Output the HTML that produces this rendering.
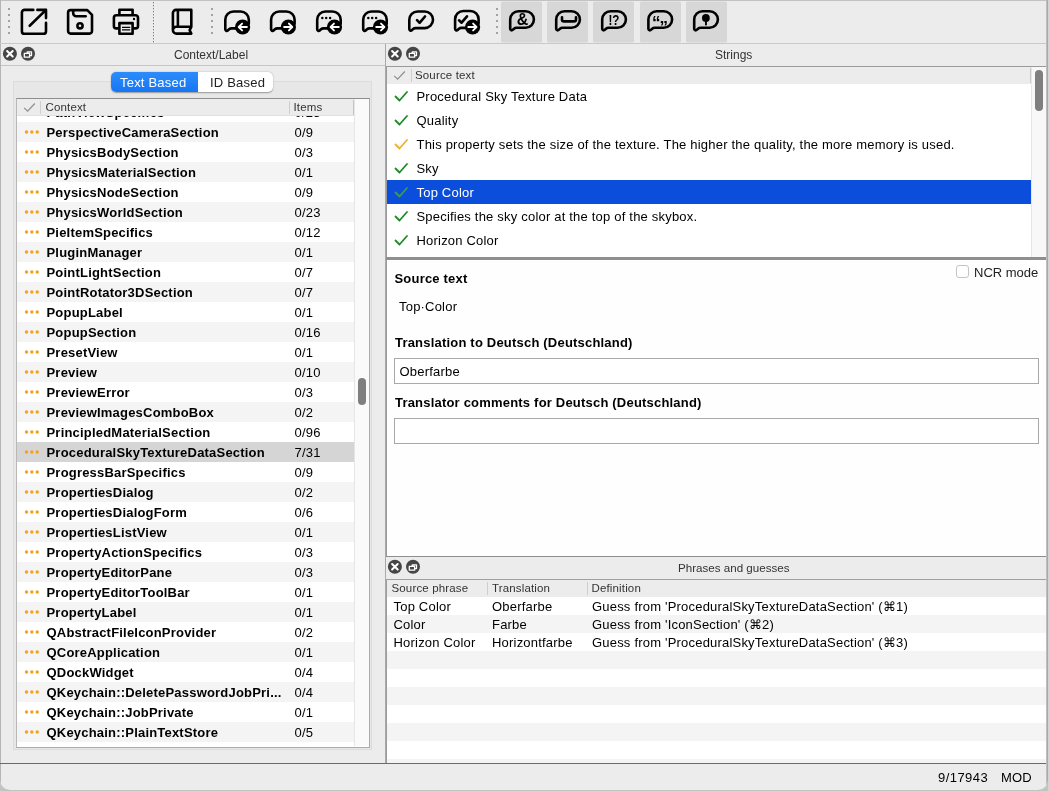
<!DOCTYPE html>
<html><head><meta charset="utf-8"><style>
html,body{margin:0;padding:0;}
body{width:1049px;height:791px;overflow:hidden;background:#c3c3c3;position:relative;font-family:"Liberation Sans", sans-serif;color:#000;-webkit-font-smoothing:antialiased;}
#win{will-change:transform;}
.ab{position:absolute;}
.t{position:absolute;white-space:nowrap;line-height:1;letter-spacing:0.2px;}
.h{letter-spacing:0;}
</style></head><body>
<div class="ab" id="win" style="left:0;top:0;width:1048px;height:790px;background:#ececec;border-radius:0 0 10px 10px;overflow:hidden;">

<div class="ab" style="left:0;top:0;width:1047px;height:1px;background:#c2c2c2"></div>
<div class="ab" style="left:0;top:0;width:1px;height:790px;background:#b5b5b5"></div>
<div class="ab" style="left:0;top:43px;width:1047px;height:1px;background:#c9c9c9"></div>
<svg class="ab" style="left:0;top:0" width="760" height="44" viewBox="0 0 760 44"><rect x="8" y="8" width="2" height="2" fill="#a2a2a2"/><rect x="8" y="14" width="2" height="2" fill="#a2a2a2"/><rect x="8" y="20" width="2" height="2" fill="#a2a2a2"/><rect x="8" y="26" width="2" height="2" fill="#a2a2a2"/><rect x="8" y="32" width="2" height="2" fill="#a2a2a2"/><rect x="211" y="8" width="2" height="2" fill="#a2a2a2"/><rect x="211" y="14" width="2" height="2" fill="#a2a2a2"/><rect x="211" y="20" width="2" height="2" fill="#a2a2a2"/><rect x="211" y="26" width="2" height="2" fill="#a2a2a2"/><rect x="211" y="32" width="2" height="2" fill="#a2a2a2"/><rect x="496" y="8" width="2" height="2" fill="#a2a2a2"/><rect x="496" y="14" width="2" height="2" fill="#a2a2a2"/><rect x="496" y="20" width="2" height="2" fill="#a2a2a2"/><rect x="496" y="26" width="2" height="2" fill="#a2a2a2"/><rect x="496" y="32" width="2" height="2" fill="#a2a2a2"/><rect x="153" y="2" width="1.1" height="1.3" fill="#767676"/><rect x="154.1" y="2" width="1" height="1.3" fill="#f8f8f8"/><rect x="153" y="5" width="1.1" height="1.3" fill="#767676"/><rect x="154.1" y="5" width="1" height="1.3" fill="#f8f8f8"/><rect x="153" y="8" width="1.1" height="1.3" fill="#767676"/><rect x="154.1" y="8" width="1" height="1.3" fill="#f8f8f8"/><rect x="153" y="11" width="1.1" height="1.3" fill="#767676"/><rect x="154.1" y="11" width="1" height="1.3" fill="#f8f8f8"/><rect x="153" y="14" width="1.1" height="1.3" fill="#767676"/><rect x="154.1" y="14" width="1" height="1.3" fill="#f8f8f8"/><rect x="153" y="17" width="1.1" height="1.3" fill="#767676"/><rect x="154.1" y="17" width="1" height="1.3" fill="#f8f8f8"/><rect x="153" y="20" width="1.1" height="1.3" fill="#767676"/><rect x="154.1" y="20" width="1" height="1.3" fill="#f8f8f8"/><rect x="153" y="23" width="1.1" height="1.3" fill="#767676"/><rect x="154.1" y="23" width="1" height="1.3" fill="#f8f8f8"/><rect x="153" y="26" width="1.1" height="1.3" fill="#767676"/><rect x="154.1" y="26" width="1" height="1.3" fill="#f8f8f8"/><rect x="153" y="29" width="1.1" height="1.3" fill="#767676"/><rect x="154.1" y="29" width="1" height="1.3" fill="#f8f8f8"/><rect x="153" y="32" width="1.1" height="1.3" fill="#767676"/><rect x="154.1" y="32" width="1" height="1.3" fill="#f8f8f8"/><rect x="153" y="35" width="1.1" height="1.3" fill="#767676"/><rect x="154.1" y="35" width="1" height="1.3" fill="#f8f8f8"/><rect x="153" y="38" width="1.1" height="1.3" fill="#767676"/><rect x="154.1" y="38" width="1" height="1.3" fill="#f8f8f8"/><rect x="153" y="41" width="1.1" height="1.3" fill="#767676"/><rect x="154.1" y="41" width="1" height="1.3" fill="#f8f8f8"/><rect x="501" y="1.5" width="41" height="41" rx="1.5" fill="#d7d7d7"/><rect x="547" y="1.5" width="41" height="41" rx="1.5" fill="#d7d7d7"/><rect x="593" y="1.5" width="41" height="41" rx="1.5" fill="#d7d7d7"/><rect x="640" y="1.5" width="41" height="41" rx="1.5" fill="#d7d7d7"/><rect x="686" y="1.5" width="41" height="41" rx="1.5" fill="#d7d7d7"/><path fill="none" stroke="#000" stroke-width="2.6" stroke-linecap="round" stroke-linejoin="round" d="M33.3,9.9 H24.5 A2.6,2.6 0 0 0 21.9,12.5 V31.2 A2.6,2.6 0 0 0 24.5,33.8 H43.4 A2.6,2.6 0 0 0 46,31.2 V22.7 M37.4,9.9 H46 V18.1 M29.7,25.8 L46,9.9"/><path fill="none" stroke="#000" stroke-width="2.6" stroke-linecap="round" stroke-linejoin="round" d="M68.1,12.6 A2.5,2.5 0 0 1 70.6,10.1 H87.3 L92,14.8 V31.1 A2.5,2.5 0 0 1 89.5,33.6 H70.6 A2.5,2.5 0 0 1 68.1,31.1 Z M73.2,10.1 V13.3 A3,3 0 0 0 76.2,16.3 H85.7"/><circle cx="80" cy="25.8" r="2.6" fill="none" stroke="#000" stroke-width="2.6" stroke-linecap="round" stroke-linejoin="round"/><path fill="none" stroke="#000" stroke-width="2.6" stroke-linecap="round" stroke-linejoin="round" d="M119.4,15.2 V9.7 H132.6 V15.2 M119.4,28.4 H116.4 A2.5,2.5 0 0 1 113.9,25.9 V17.7 A2.5,2.5 0 0 1 116.4,15.2 H135.5 A2.5,2.5 0 0 1 138,17.7 V25.9 A2.5,2.5 0 0 1 135.5,28.4 H132.6 M119.4,23.1 H132.6 V33.8 H119.4 Z"/><path d="M122,27.4 H130.2 M122,29.9 H130.2" stroke="#000" stroke-width="1.3"/><circle cx="134" cy="19" r="1.2" fill="#000"/><path fill="none" stroke="#000" stroke-width="2.6" stroke-linecap="round" stroke-linejoin="round" d="M176,9.9 H191.3 V26.8 L189.6,30.2 L191.3,33.6 H176.5 A3.6,3.6 0 0 1 172.9,30 V13 A3.1,3.1 0 0 1 176,9.9 Z M177.9,10.5 V26.8 M172.9,30.2 A3.4,3.4 0 0 1 176.3,26.8 H191.3"/><path fill="none" stroke="#000" stroke-width="2.6" stroke-linecap="round" stroke-linejoin="round" d="M225.3,29.299999999999997 V19.7 C225.3,15.19 228.99,11.5 233.5,11.5 H240.60000000000002 C245.11,11.5 248.8,15.19 248.8,19.7 V23.7 M225.3,29.299999999999997 C225.3,30.7 226.8,31.4 227.8,30.5 L229.10000000000002,29.299999999999997 C229.8,28.7 230.70000000000002,28.4 231.60000000000002,28.4 H236.3"/><circle cx="242.60000000000002" cy="27.0" r="7.6" fill="#000"/><path d="M246.90000000000003,27.0 H239.20000000000002 M242.10000000000002,23.6 L238.70000000000002,27.0 L242.10000000000002,30.4" fill="none" stroke="#fff" stroke-width="1.85" stroke-linecap="round" stroke-linejoin="round"/><path fill="none" stroke="#000" stroke-width="2.6" stroke-linecap="round" stroke-linejoin="round" d="M271.1,29.299999999999997 V19.7 C271.1,15.19 274.79,11.5 279.3,11.5 H286.40000000000003 C290.91,11.5 294.6,15.19 294.6,19.7 V23.7 M271.1,29.299999999999997 C271.1,30.7 272.6,31.4 273.6,30.5 L274.90000000000003,29.299999999999997 C275.6,28.7 276.5,28.4 277.40000000000003,28.4 H282.1"/><circle cx="288.40000000000003" cy="27.0" r="7.6" fill="#000"/><path d="M284.1,27.0 H291.8 M288.90000000000003,23.6 L292.3,27.0 L288.90000000000003,30.4" fill="none" stroke="#fff" stroke-width="1.85" stroke-linecap="round" stroke-linejoin="round"/><path fill="none" stroke="#000" stroke-width="2.6" stroke-linecap="round" stroke-linejoin="round" d="M317.2,29.299999999999997 V19.7 C317.2,15.19 320.89,11.5 325.4,11.5 H332.5 C337.01,11.5 340.7,15.19 340.7,19.7 V23.7 M317.2,29.299999999999997 C317.2,30.7 318.7,31.4 319.7,30.5 L321.0,29.299999999999997 C321.7,28.7 322.59999999999997,28.4 323.5,28.4 H328.2"/><circle cx="322.3" cy="17.9" r="1.25" fill="#000"/><circle cx="326.2" cy="17.9" r="1.25" fill="#000"/><circle cx="330.1" cy="17.9" r="1.25" fill="#000"/><circle cx="334.5" cy="27.0" r="7.6" fill="#000"/><path d="M338.8,27.0 H331.1 M334.0,23.6 L330.6,27.0 L334.0,30.4" fill="none" stroke="#fff" stroke-width="1.85" stroke-linecap="round" stroke-linejoin="round"/><path fill="none" stroke="#000" stroke-width="2.6" stroke-linecap="round" stroke-linejoin="round" d="M363.2,29.299999999999997 V19.7 C363.2,15.19 366.89,11.5 371.4,11.5 H378.5 C383.01,11.5 386.7,15.19 386.7,19.7 V23.7 M363.2,29.299999999999997 C363.2,30.7 364.7,31.4 365.7,30.5 L367.0,29.299999999999997 C367.7,28.7 368.59999999999997,28.4 369.5,28.4 H374.2"/><circle cx="368.3" cy="17.9" r="1.25" fill="#000"/><circle cx="372.2" cy="17.9" r="1.25" fill="#000"/><circle cx="376.1" cy="17.9" r="1.25" fill="#000"/><circle cx="380.5" cy="27.0" r="7.6" fill="#000"/><path d="M376.2,27.0 H383.9 M381.0,23.6 L384.4,27.0 L381.0,30.4" fill="none" stroke="#fff" stroke-width="1.85" stroke-linecap="round" stroke-linejoin="round"/><path fill="none" stroke="#000" stroke-width="2.6" stroke-linecap="round" stroke-linejoin="round" d="M409.3,19.8 C409.3,15.235 413.035,11.5 417.6,11.5 H424.7 C429.265,11.5 433.0,15.235 433.0,19.8 C433.0,24.365000000000002 429.265,28.1 424.7,28.1 H415.6 C414.7,28.1 413.8,28.400000000000002 413.1,29.0 L411.8,30.200000000000003 C410.8,31.1 409.3,30.400000000000002 409.3,29.0 Z"/><path fill="none" stroke="#000" stroke-width="2.6" stroke-linecap="round" stroke-linejoin="round" d="M417,20.2 L419.6,22.8 L425,16.5"/><path fill="none" stroke="#000" stroke-width="2.6" stroke-linecap="round" stroke-linejoin="round" d="M455.1,28.799999999999997 V19.2 C455.1,14.69 458.79,11 463.3,11 H470.40000000000003 C474.91,11 478.6,14.69 478.6,19.2 V23.2 M455.1,28.799999999999997 C455.1,30.2 456.6,30.9 457.6,30.0 L458.90000000000003,28.799999999999997 C459.6,28.2 460.5,27.9 461.40000000000003,27.9 H466.1"/><path fill="none" stroke="#000" stroke-width="2.6" stroke-linecap="round" stroke-linejoin="round" d="M459,20.3 L461.6,22.7 L467,16.3"/><circle cx="472.6" cy="27.0" r="7.6" fill="#000"/><path d="M468.3,27.0 H476.0 M473.1,23.6 L476.5,27.0 L473.1,30.4" fill="none" stroke="#fff" stroke-width="1.85" stroke-linecap="round" stroke-linejoin="round"/><path fill="none" stroke="#000" stroke-width="2.6" stroke-linecap="round" stroke-linejoin="round" d="M510.2,19.5 C510.2,14.934999999999999 513.935,11.2 518.5,11.2 H525.6 C530.165,11.2 533.9,14.934999999999999 533.9,19.5 C533.9,24.065 530.165,27.8 525.6,27.8 H516.5 C515.6,27.8 514.7,28.1 514.0,28.7 L512.7,29.900000000000002 C511.7,30.8 510.2,30.1 510.2,28.7 Z"/><path fill="none" stroke="#000" stroke-width="2.6" stroke-linecap="round" stroke-linejoin="round" d="M556.2,19.5 C556.2,14.934999999999999 559.9350000000001,11.2 564.5,11.2 H571.6000000000001 C576.1650000000001,11.2 579.9000000000001,14.934999999999999 579.9000000000001,19.5 C579.9000000000001,24.065 576.1650000000001,27.8 571.6000000000001,27.8 H562.5 C561.6,27.8 560.7,28.1 560.0,28.7 L558.7,29.900000000000002 C557.7,30.8 556.2,30.1 556.2,28.7 Z"/><path fill="none" stroke="#000" stroke-width="2.6" stroke-linecap="round" stroke-linejoin="round" d="M602.2,19.5 C602.2,14.934999999999999 605.9350000000001,11.2 610.5,11.2 H617.6000000000001 C622.1650000000001,11.2 625.9000000000001,14.934999999999999 625.9000000000001,19.5 C625.9000000000001,24.065 622.1650000000001,27.8 617.6000000000001,27.8 H608.5 C607.6,27.8 606.7,28.1 606.0,28.7 L604.7,29.900000000000002 C603.7,30.8 602.2,30.1 602.2,28.7 Z"/><path fill="none" stroke="#000" stroke-width="2.6" stroke-linecap="round" stroke-linejoin="round" d="M648.4,19.5 C648.4,14.934999999999999 652.135,11.2 656.6999999999999,11.2 H663.8000000000001 C668.365,11.2 672.1,14.934999999999999 672.1,19.5 C672.1,24.065 668.365,27.8 663.8000000000001,27.8 H654.6999999999999 C653.8,27.8 652.9,28.1 652.1999999999999,28.7 L650.9,29.900000000000002 C649.9,30.8 648.4,30.1 648.4,28.7 Z"/><path fill="none" stroke="#000" stroke-width="2.6" stroke-linecap="round" stroke-linejoin="round" d="M694.2,19.5 C694.2,14.934999999999999 697.9350000000001,11.2 702.5,11.2 H709.6000000000001 C714.1650000000001,11.2 717.9000000000001,14.934999999999999 717.9000000000001,19.5 C717.9000000000001,24.065 714.1650000000001,27.8 709.6000000000001,27.8 H700.5 C699.6,27.8 698.7,28.1 698.0,28.7 L696.7,29.900000000000002 C695.7,30.8 694.2,30.1 694.2,28.7 Z"/><text x="522.5" y="25.4" text-anchor="middle" font-family="Liberation Sans" font-weight="bold" font-size="16">&amp;</text><path fill="none" stroke="#000" stroke-width="2.6" stroke-linecap="round" stroke-linejoin="round" d="M562,17.2 V19.4 A2,2 0 0 0 564,21.4 H574 A2,2 0 0 0 576,19.4 V17.2"/><g transform="translate(614,25.3) scale(0.78,1)"><text x="0" y="0" text-anchor="middle" font-family="Liberation Sans" font-weight="bold" font-size="15">!?</text></g><text x="656.2" y="27.6" text-anchor="middle" font-family="Liberation Sans" font-weight="bold" font-size="17">&#8220;</text><text x="663.8" y="22.6" text-anchor="middle" font-family="Liberation Sans" font-weight="bold" font-size="17">&#8222;</text><circle cx="705.9" cy="17.9" r="3.9" fill="#000"/><rect x="705" y="20" width="1.9" height="5.3" fill="#000"/></svg>
<div class="ab" style="left:385px;top:44px;width:1px;height:719px;background:#a9a9a9"></div>
<div class="ab" style="left:1px;top:65px;width:384px;height:1px;background:#c6c6c6"></div>
<svg class="ab" style="left:2px;top:46px" width="36" height="16" viewBox="0 0 36 16">
<circle cx="7.9" cy="7.75" r="7" fill="#454545"/>
<path d="M5.1,4.95 L10.7,10.55 M10.7,4.95 L5.1,10.55" stroke="#fff" stroke-width="2" stroke-linecap="round"/>
<circle cx="26" cy="7.75" r="7" fill="#454545"/>
<path d="M25.2,7.4 V5.9 H29.5 V9.6 H27.6 M22.3,7.4 H27.6 V11.2 H22.3 Z" stroke="#fff" stroke-width="1.3" fill="none" stroke-linejoin="round"/>
</svg>
<div class="t h" style="left:174px;top:48.8px;font-size:12px;color:#333">Context/Label</div>
<div class="ab" style="left:13px;top:81px;width:359px;height:669px;background:#e7e7e7;border:1px solid #dcdcdc;box-sizing:border-box"></div>
<div class="ab" style="left:111px;top:72px;width:162px;height:20px;background:#fff;border-radius:5px;box-shadow:0 0.5px 1.5px rgba(0,0,0,0.35)"></div>
<div class="ab" style="left:111px;top:72px;width:87px;height:20px;background:linear-gradient(#2d8cfb,#1676f3);border-radius:5px 0 0 5px"></div>
<div class="t" style="left:120px;top:75.5px;font-size:13px;color:#fff">Text Based</div>
<div class="t" style="left:210px;top:75.5px;font-size:13px;color:#222">ID Based</div>
<div class="ab" style="left:16px;top:98px;width:354px;height:650px;background:#fff;border:1px solid #ababab;border-top-color:#8e8e8e;border-left-color:#b8b8b8;box-sizing:border-box;overflow:hidden">
<div class="ab" style="left:0;top:3px;width:337px;height:20px;background:#ffffff"></div>
<svg class="ab" style="left:6px;top:9px" width="18" height="8" viewBox="0 0 18 8"><circle cx="3.5" cy="4" r="1.7" fill="#f4a21a"/><circle cx="8.8" cy="4" r="1.7" fill="#f4a21a"/><circle cx="14.200000000000003" cy="4" r="1.7" fill="#f4a21a"/></svg>
<div class="t" style="left:29.5px;top:7px;font-size:13px;font-weight:bold">PathViewSpecifics</div>
<div class="t" style="left:277.5px;top:7px;font-size:13px">0/23</div>
<div class="ab" style="left:0;top:23px;width:337px;height:20px;background:#f4f4f4"></div>
<svg class="ab" style="left:6px;top:29px" width="18" height="8" viewBox="0 0 18 8"><circle cx="3.5" cy="4" r="1.7" fill="#f4a21a"/><circle cx="8.8" cy="4" r="1.7" fill="#f4a21a"/><circle cx="14.200000000000003" cy="4" r="1.7" fill="#f4a21a"/></svg>
<div class="t" style="left:29.5px;top:27px;font-size:13px;font-weight:bold">PerspectiveCameraSection</div>
<div class="t" style="left:277.5px;top:27px;font-size:13px">0/9</div>
<div class="ab" style="left:0;top:43px;width:337px;height:20px;background:#ffffff"></div>
<svg class="ab" style="left:6px;top:49px" width="18" height="8" viewBox="0 0 18 8"><circle cx="3.5" cy="4" r="1.7" fill="#f4a21a"/><circle cx="8.8" cy="4" r="1.7" fill="#f4a21a"/><circle cx="14.200000000000003" cy="4" r="1.7" fill="#f4a21a"/></svg>
<div class="t" style="left:29.5px;top:47px;font-size:13px;font-weight:bold">PhysicsBodySection</div>
<div class="t" style="left:277.5px;top:47px;font-size:13px">0/3</div>
<div class="ab" style="left:0;top:63px;width:337px;height:20px;background:#f4f4f4"></div>
<svg class="ab" style="left:6px;top:69px" width="18" height="8" viewBox="0 0 18 8"><circle cx="3.5" cy="4" r="1.7" fill="#f4a21a"/><circle cx="8.8" cy="4" r="1.7" fill="#f4a21a"/><circle cx="14.200000000000003" cy="4" r="1.7" fill="#f4a21a"/></svg>
<div class="t" style="left:29.5px;top:67px;font-size:13px;font-weight:bold">PhysicsMaterialSection</div>
<div class="t" style="left:277.5px;top:67px;font-size:13px">0/1</div>
<div class="ab" style="left:0;top:83px;width:337px;height:20px;background:#ffffff"></div>
<svg class="ab" style="left:6px;top:89px" width="18" height="8" viewBox="0 0 18 8"><circle cx="3.5" cy="4" r="1.7" fill="#f4a21a"/><circle cx="8.8" cy="4" r="1.7" fill="#f4a21a"/><circle cx="14.200000000000003" cy="4" r="1.7" fill="#f4a21a"/></svg>
<div class="t" style="left:29.5px;top:87px;font-size:13px;font-weight:bold">PhysicsNodeSection</div>
<div class="t" style="left:277.5px;top:87px;font-size:13px">0/9</div>
<div class="ab" style="left:0;top:103px;width:337px;height:20px;background:#f4f4f4"></div>
<svg class="ab" style="left:6px;top:109px" width="18" height="8" viewBox="0 0 18 8"><circle cx="3.5" cy="4" r="1.7" fill="#f4a21a"/><circle cx="8.8" cy="4" r="1.7" fill="#f4a21a"/><circle cx="14.200000000000003" cy="4" r="1.7" fill="#f4a21a"/></svg>
<div class="t" style="left:29.5px;top:107px;font-size:13px;font-weight:bold">PhysicsWorldSection</div>
<div class="t" style="left:277.5px;top:107px;font-size:13px">0/23</div>
<div class="ab" style="left:0;top:123px;width:337px;height:20px;background:#ffffff"></div>
<svg class="ab" style="left:6px;top:129px" width="18" height="8" viewBox="0 0 18 8"><circle cx="3.5" cy="4" r="1.7" fill="#f4a21a"/><circle cx="8.8" cy="4" r="1.7" fill="#f4a21a"/><circle cx="14.200000000000003" cy="4" r="1.7" fill="#f4a21a"/></svg>
<div class="t" style="left:29.5px;top:127px;font-size:13px;font-weight:bold">PieItemSpecifics</div>
<div class="t" style="left:277.5px;top:127px;font-size:13px">0/12</div>
<div class="ab" style="left:0;top:143px;width:337px;height:20px;background:#f4f4f4"></div>
<svg class="ab" style="left:6px;top:149px" width="18" height="8" viewBox="0 0 18 8"><circle cx="3.5" cy="4" r="1.7" fill="#f4a21a"/><circle cx="8.8" cy="4" r="1.7" fill="#f4a21a"/><circle cx="14.200000000000003" cy="4" r="1.7" fill="#f4a21a"/></svg>
<div class="t" style="left:29.5px;top:147px;font-size:13px;font-weight:bold">PluginManager</div>
<div class="t" style="left:277.5px;top:147px;font-size:13px">0/1</div>
<div class="ab" style="left:0;top:163px;width:337px;height:20px;background:#ffffff"></div>
<svg class="ab" style="left:6px;top:169px" width="18" height="8" viewBox="0 0 18 8"><circle cx="3.5" cy="4" r="1.7" fill="#f4a21a"/><circle cx="8.8" cy="4" r="1.7" fill="#f4a21a"/><circle cx="14.200000000000003" cy="4" r="1.7" fill="#f4a21a"/></svg>
<div class="t" style="left:29.5px;top:167px;font-size:13px;font-weight:bold">PointLightSection</div>
<div class="t" style="left:277.5px;top:167px;font-size:13px">0/7</div>
<div class="ab" style="left:0;top:183px;width:337px;height:20px;background:#f4f4f4"></div>
<svg class="ab" style="left:6px;top:189px" width="18" height="8" viewBox="0 0 18 8"><circle cx="3.5" cy="4" r="1.7" fill="#f4a21a"/><circle cx="8.8" cy="4" r="1.7" fill="#f4a21a"/><circle cx="14.200000000000003" cy="4" r="1.7" fill="#f4a21a"/></svg>
<div class="t" style="left:29.5px;top:187px;font-size:13px;font-weight:bold">PointRotator3DSection</div>
<div class="t" style="left:277.5px;top:187px;font-size:13px">0/7</div>
<div class="ab" style="left:0;top:203px;width:337px;height:20px;background:#ffffff"></div>
<svg class="ab" style="left:6px;top:209px" width="18" height="8" viewBox="0 0 18 8"><circle cx="3.5" cy="4" r="1.7" fill="#f4a21a"/><circle cx="8.8" cy="4" r="1.7" fill="#f4a21a"/><circle cx="14.200000000000003" cy="4" r="1.7" fill="#f4a21a"/></svg>
<div class="t" style="left:29.5px;top:207px;font-size:13px;font-weight:bold">PopupLabel</div>
<div class="t" style="left:277.5px;top:207px;font-size:13px">0/1</div>
<div class="ab" style="left:0;top:223px;width:337px;height:20px;background:#f4f4f4"></div>
<svg class="ab" style="left:6px;top:229px" width="18" height="8" viewBox="0 0 18 8"><circle cx="3.5" cy="4" r="1.7" fill="#f4a21a"/><circle cx="8.8" cy="4" r="1.7" fill="#f4a21a"/><circle cx="14.200000000000003" cy="4" r="1.7" fill="#f4a21a"/></svg>
<div class="t" style="left:29.5px;top:227px;font-size:13px;font-weight:bold">PopupSection</div>
<div class="t" style="left:277.5px;top:227px;font-size:13px">0/16</div>
<div class="ab" style="left:0;top:243px;width:337px;height:20px;background:#ffffff"></div>
<svg class="ab" style="left:6px;top:249px" width="18" height="8" viewBox="0 0 18 8"><circle cx="3.5" cy="4" r="1.7" fill="#f4a21a"/><circle cx="8.8" cy="4" r="1.7" fill="#f4a21a"/><circle cx="14.200000000000003" cy="4" r="1.7" fill="#f4a21a"/></svg>
<div class="t" style="left:29.5px;top:247px;font-size:13px;font-weight:bold">PresetView</div>
<div class="t" style="left:277.5px;top:247px;font-size:13px">0/1</div>
<div class="ab" style="left:0;top:263px;width:337px;height:20px;background:#f4f4f4"></div>
<svg class="ab" style="left:6px;top:269px" width="18" height="8" viewBox="0 0 18 8"><circle cx="3.5" cy="4" r="1.7" fill="#f4a21a"/><circle cx="8.8" cy="4" r="1.7" fill="#f4a21a"/><circle cx="14.200000000000003" cy="4" r="1.7" fill="#f4a21a"/></svg>
<div class="t" style="left:29.5px;top:267px;font-size:13px;font-weight:bold">Preview</div>
<div class="t" style="left:277.5px;top:267px;font-size:13px">0/10</div>
<div class="ab" style="left:0;top:283px;width:337px;height:20px;background:#ffffff"></div>
<svg class="ab" style="left:6px;top:289px" width="18" height="8" viewBox="0 0 18 8"><circle cx="3.5" cy="4" r="1.7" fill="#f4a21a"/><circle cx="8.8" cy="4" r="1.7" fill="#f4a21a"/><circle cx="14.200000000000003" cy="4" r="1.7" fill="#f4a21a"/></svg>
<div class="t" style="left:29.5px;top:287px;font-size:13px;font-weight:bold">PreviewError</div>
<div class="t" style="left:277.5px;top:287px;font-size:13px">0/3</div>
<div class="ab" style="left:0;top:303px;width:337px;height:20px;background:#f4f4f4"></div>
<svg class="ab" style="left:6px;top:309px" width="18" height="8" viewBox="0 0 18 8"><circle cx="3.5" cy="4" r="1.7" fill="#f4a21a"/><circle cx="8.8" cy="4" r="1.7" fill="#f4a21a"/><circle cx="14.200000000000003" cy="4" r="1.7" fill="#f4a21a"/></svg>
<div class="t" style="left:29.5px;top:307px;font-size:13px;font-weight:bold">PreviewImagesComboBox</div>
<div class="t" style="left:277.5px;top:307px;font-size:13px">0/2</div>
<div class="ab" style="left:0;top:323px;width:337px;height:20px;background:#ffffff"></div>
<svg class="ab" style="left:6px;top:329px" width="18" height="8" viewBox="0 0 18 8"><circle cx="3.5" cy="4" r="1.7" fill="#f4a21a"/><circle cx="8.8" cy="4" r="1.7" fill="#f4a21a"/><circle cx="14.200000000000003" cy="4" r="1.7" fill="#f4a21a"/></svg>
<div class="t" style="left:29.5px;top:327px;font-size:13px;font-weight:bold">PrincipledMaterialSection</div>
<div class="t" style="left:277.5px;top:327px;font-size:13px">0/96</div>
<div class="ab" style="left:0;top:343px;width:337px;height:20px;background:#d5d5d5"></div>
<svg class="ab" style="left:6px;top:349px" width="18" height="8" viewBox="0 0 18 8"><circle cx="3.5" cy="4" r="1.7" fill="#f4a21a"/><circle cx="8.8" cy="4" r="1.7" fill="#f4a21a"/><circle cx="14.200000000000003" cy="4" r="1.7" fill="#f4a21a"/></svg>
<div class="t" style="left:29.5px;top:347px;font-size:13px;font-weight:bold">ProceduralSkyTextureDataSection</div>
<div class="t" style="left:277.5px;top:347px;font-size:13px">7/31</div>
<div class="ab" style="left:0;top:363px;width:337px;height:20px;background:#ffffff"></div>
<svg class="ab" style="left:6px;top:369px" width="18" height="8" viewBox="0 0 18 8"><circle cx="3.5" cy="4" r="1.7" fill="#f4a21a"/><circle cx="8.8" cy="4" r="1.7" fill="#f4a21a"/><circle cx="14.200000000000003" cy="4" r="1.7" fill="#f4a21a"/></svg>
<div class="t" style="left:29.5px;top:367px;font-size:13px;font-weight:bold">ProgressBarSpecifics</div>
<div class="t" style="left:277.5px;top:367px;font-size:13px">0/9</div>
<div class="ab" style="left:0;top:383px;width:337px;height:20px;background:#f4f4f4"></div>
<svg class="ab" style="left:6px;top:389px" width="18" height="8" viewBox="0 0 18 8"><circle cx="3.5" cy="4" r="1.7" fill="#f4a21a"/><circle cx="8.8" cy="4" r="1.7" fill="#f4a21a"/><circle cx="14.200000000000003" cy="4" r="1.7" fill="#f4a21a"/></svg>
<div class="t" style="left:29.5px;top:387px;font-size:13px;font-weight:bold">PropertiesDialog</div>
<div class="t" style="left:277.5px;top:387px;font-size:13px">0/2</div>
<div class="ab" style="left:0;top:403px;width:337px;height:20px;background:#ffffff"></div>
<svg class="ab" style="left:6px;top:409px" width="18" height="8" viewBox="0 0 18 8"><circle cx="3.5" cy="4" r="1.7" fill="#f4a21a"/><circle cx="8.8" cy="4" r="1.7" fill="#f4a21a"/><circle cx="14.200000000000003" cy="4" r="1.7" fill="#f4a21a"/></svg>
<div class="t" style="left:29.5px;top:407px;font-size:13px;font-weight:bold">PropertiesDialogForm</div>
<div class="t" style="left:277.5px;top:407px;font-size:13px">0/6</div>
<div class="ab" style="left:0;top:423px;width:337px;height:20px;background:#f4f4f4"></div>
<svg class="ab" style="left:6px;top:429px" width="18" height="8" viewBox="0 0 18 8"><circle cx="3.5" cy="4" r="1.7" fill="#f4a21a"/><circle cx="8.8" cy="4" r="1.7" fill="#f4a21a"/><circle cx="14.200000000000003" cy="4" r="1.7" fill="#f4a21a"/></svg>
<div class="t" style="left:29.5px;top:427px;font-size:13px;font-weight:bold">PropertiesListView</div>
<div class="t" style="left:277.5px;top:427px;font-size:13px">0/1</div>
<div class="ab" style="left:0;top:443px;width:337px;height:20px;background:#ffffff"></div>
<svg class="ab" style="left:6px;top:449px" width="18" height="8" viewBox="0 0 18 8"><circle cx="3.5" cy="4" r="1.7" fill="#f4a21a"/><circle cx="8.8" cy="4" r="1.7" fill="#f4a21a"/><circle cx="14.200000000000003" cy="4" r="1.7" fill="#f4a21a"/></svg>
<div class="t" style="left:29.5px;top:447px;font-size:13px;font-weight:bold">PropertyActionSpecifics</div>
<div class="t" style="left:277.5px;top:447px;font-size:13px">0/3</div>
<div class="ab" style="left:0;top:463px;width:337px;height:20px;background:#f4f4f4"></div>
<svg class="ab" style="left:6px;top:469px" width="18" height="8" viewBox="0 0 18 8"><circle cx="3.5" cy="4" r="1.7" fill="#f4a21a"/><circle cx="8.8" cy="4" r="1.7" fill="#f4a21a"/><circle cx="14.200000000000003" cy="4" r="1.7" fill="#f4a21a"/></svg>
<div class="t" style="left:29.5px;top:467px;font-size:13px;font-weight:bold">PropertyEditorPane</div>
<div class="t" style="left:277.5px;top:467px;font-size:13px">0/3</div>
<div class="ab" style="left:0;top:483px;width:337px;height:20px;background:#ffffff"></div>
<svg class="ab" style="left:6px;top:489px" width="18" height="8" viewBox="0 0 18 8"><circle cx="3.5" cy="4" r="1.7" fill="#f4a21a"/><circle cx="8.8" cy="4" r="1.7" fill="#f4a21a"/><circle cx="14.200000000000003" cy="4" r="1.7" fill="#f4a21a"/></svg>
<div class="t" style="left:29.5px;top:487px;font-size:13px;font-weight:bold">PropertyEditorToolBar</div>
<div class="t" style="left:277.5px;top:487px;font-size:13px">0/1</div>
<div class="ab" style="left:0;top:503px;width:337px;height:20px;background:#f4f4f4"></div>
<svg class="ab" style="left:6px;top:509px" width="18" height="8" viewBox="0 0 18 8"><circle cx="3.5" cy="4" r="1.7" fill="#f4a21a"/><circle cx="8.8" cy="4" r="1.7" fill="#f4a21a"/><circle cx="14.200000000000003" cy="4" r="1.7" fill="#f4a21a"/></svg>
<div class="t" style="left:29.5px;top:507px;font-size:13px;font-weight:bold">PropertyLabel</div>
<div class="t" style="left:277.5px;top:507px;font-size:13px">0/1</div>
<div class="ab" style="left:0;top:523px;width:337px;height:20px;background:#ffffff"></div>
<svg class="ab" style="left:6px;top:529px" width="18" height="8" viewBox="0 0 18 8"><circle cx="3.5" cy="4" r="1.7" fill="#f4a21a"/><circle cx="8.8" cy="4" r="1.7" fill="#f4a21a"/><circle cx="14.200000000000003" cy="4" r="1.7" fill="#f4a21a"/></svg>
<div class="t" style="left:29.5px;top:527px;font-size:13px;font-weight:bold">QAbstractFileIconProvider</div>
<div class="t" style="left:277.5px;top:527px;font-size:13px">0/2</div>
<div class="ab" style="left:0;top:543px;width:337px;height:20px;background:#f4f4f4"></div>
<svg class="ab" style="left:6px;top:549px" width="18" height="8" viewBox="0 0 18 8"><circle cx="3.5" cy="4" r="1.7" fill="#f4a21a"/><circle cx="8.8" cy="4" r="1.7" fill="#f4a21a"/><circle cx="14.200000000000003" cy="4" r="1.7" fill="#f4a21a"/></svg>
<div class="t" style="left:29.5px;top:547px;font-size:13px;font-weight:bold">QCoreApplication</div>
<div class="t" style="left:277.5px;top:547px;font-size:13px">0/1</div>
<div class="ab" style="left:0;top:563px;width:337px;height:20px;background:#ffffff"></div>
<svg class="ab" style="left:6px;top:569px" width="18" height="8" viewBox="0 0 18 8"><circle cx="3.5" cy="4" r="1.7" fill="#f4a21a"/><circle cx="8.8" cy="4" r="1.7" fill="#f4a21a"/><circle cx="14.200000000000003" cy="4" r="1.7" fill="#f4a21a"/></svg>
<div class="t" style="left:29.5px;top:567px;font-size:13px;font-weight:bold">QDockWidget</div>
<div class="t" style="left:277.5px;top:567px;font-size:13px">0/4</div>
<div class="ab" style="left:0;top:583px;width:337px;height:20px;background:#f4f4f4"></div>
<svg class="ab" style="left:6px;top:589px" width="18" height="8" viewBox="0 0 18 8"><circle cx="3.5" cy="4" r="1.7" fill="#f4a21a"/><circle cx="8.8" cy="4" r="1.7" fill="#f4a21a"/><circle cx="14.200000000000003" cy="4" r="1.7" fill="#f4a21a"/></svg>
<div class="t" style="left:29.5px;top:587px;font-size:13px;font-weight:bold">QKeychain::DeletePasswordJobPri...</div>
<div class="t" style="left:277.5px;top:587px;font-size:13px">0/4</div>
<div class="ab" style="left:0;top:603px;width:337px;height:20px;background:#ffffff"></div>
<svg class="ab" style="left:6px;top:609px" width="18" height="8" viewBox="0 0 18 8"><circle cx="3.5" cy="4" r="1.7" fill="#f4a21a"/><circle cx="8.8" cy="4" r="1.7" fill="#f4a21a"/><circle cx="14.200000000000003" cy="4" r="1.7" fill="#f4a21a"/></svg>
<div class="t" style="left:29.5px;top:607px;font-size:13px;font-weight:bold">QKeychain::JobPrivate</div>
<div class="t" style="left:277.5px;top:607px;font-size:13px">0/1</div>
<div class="ab" style="left:0;top:623px;width:337px;height:20px;background:#f4f4f4"></div>
<svg class="ab" style="left:6px;top:629px" width="18" height="8" viewBox="0 0 18 8"><circle cx="3.5" cy="4" r="1.7" fill="#f4a21a"/><circle cx="8.8" cy="4" r="1.7" fill="#f4a21a"/><circle cx="14.200000000000003" cy="4" r="1.7" fill="#f4a21a"/></svg>
<div class="t" style="left:29.5px;top:627px;font-size:13px;font-weight:bold">QKeychain::PlainTextStore</div>
<div class="t" style="left:277.5px;top:627px;font-size:13px">0/5</div>
<div class="ab" style="left:0;top:0;width:337px;height:17px;background:#ececec;border-bottom:1px solid #e0e0e0;box-sizing:border-box"></div>
<svg class="ab" style="left:6px;top:3px" width="14" height="11" viewBox="0 0 14 11"><path d="M1.2,5.8 L4.6,9.2 L11.8,1.5" fill="none" stroke="#8e8e8e" stroke-width="1.2"/></svg>
<div class="ab" style="left:23px;top:2px;width:1px;height:13px;background:#cfcfcf"></div>
<div class="t" style="left:28.5px;top:2.6px;font-size:11.5px;letter-spacing:0.15px;color:#333">Context</div>
<div class="ab" style="left:272px;top:2px;width:1px;height:13px;background:#cfcfcf"></div>
<div class="t" style="left:276.5px;top:2.6px;font-size:11.5px;letter-spacing:0.15px;color:#333">Items</div>
<div class="ab" style="left:337px;top:0;width:1px;height:17px;background:#d0d0d0"></div>
<div class="ab" style="left:337px;top:0;width:15px;height:647px;background:#fafafa;border-left:1px solid #e6e6e6;box-sizing:border-box"></div>
<div class="ab" style="left:341px;top:279px;width:8px;height:27px;background:#7f7f7f;border-radius:4px"></div>
<div class="ab" style="left:336px;top:1px;width:1px;height:15px;background:#c4c4c4"></div>
</div>
<div class="ab" style="left:386px;top:66px;width:661px;height:1px;background:#9a9a9a"></div>
<svg class="ab" style="left:387px;top:46px" width="36" height="16" viewBox="0 0 36 16">
<circle cx="7.9" cy="7.75" r="7" fill="#454545"/>
<path d="M5.1,4.95 L10.7,10.55 M10.7,4.95 L5.1,10.55" stroke="#fff" stroke-width="2" stroke-linecap="round"/>
<circle cx="26" cy="7.75" r="7" fill="#454545"/>
<path d="M25.2,7.4 V5.9 H29.5 V9.6 H27.6 M22.3,7.4 H27.6 V11.2 H22.3 Z" stroke="#fff" stroke-width="1.3" fill="none" stroke-linejoin="round"/>
</svg>
<div class="t h" style="left:715px;top:48.8px;font-size:12px;color:#333">Strings</div>
<div class="ab" style="left:386px;top:67px;width:661px;height:190px;background:#fff;border-left:1px solid #9c9c9c;border-right:1px solid #c8c8c8;box-sizing:border-box;overflow:hidden">
<div class="ab" style="left:0;top:0;width:644px;height:17px;background:#ececec"></div>
<svg class="ab" style="left:6px;top:3px" width="14" height="11" viewBox="0 0 14 11"><path d="M1.2,5.8 L4.6,9.2 L11.8,1.5" fill="none" stroke="#8e8e8e" stroke-width="1.2"/></svg>
<div class="ab" style="left:23.5px;top:2px;width:1px;height:13px;background:#cfcfcf"></div>
<div class="t" style="left:28px;top:2.6px;font-size:11.5px;letter-spacing:0.15px;color:#333">Source text</div>
<div class="ab" style="left:643.5px;top:2px;width:1px;height:15px;background:#d6d6d6"></div>
<svg class="ab" style="left:7px;top:23px" width="16" height="14" viewBox="0 0 16 14"><path d="M1.5,6.5 L5.5,10.5 L13,2" fill="none" stroke="#1e8a25" stroke-width="1.8" stroke-linecap="round" stroke-linejoin="round"/></svg>
<div class="t" style="left:29.5px;top:23px;font-size:13px;">Procedural Sky Texture Data</div>
<svg class="ab" style="left:7px;top:47px" width="16" height="14" viewBox="0 0 16 14"><path d="M1.5,6.5 L5.5,10.5 L13,2" fill="none" stroke="#1e8a25" stroke-width="1.8" stroke-linecap="round" stroke-linejoin="round"/></svg>
<div class="t" style="left:29.5px;top:47px;font-size:13px;">Quality</div>
<svg class="ab" style="left:7px;top:71px" width="16" height="14" viewBox="0 0 16 14"><path d="M1.5,6.5 L5.5,10.5 L13,2" fill="none" stroke="#f2ae2e" stroke-width="1.8" stroke-linecap="round" stroke-linejoin="round"/></svg>
<div class="t" style="left:29.5px;top:71px;font-size:13px;">This property sets the size of the texture. The higher the quality, the more memory is used.</div>
<svg class="ab" style="left:7px;top:95px" width="16" height="14" viewBox="0 0 16 14"><path d="M1.5,6.5 L5.5,10.5 L13,2" fill="none" stroke="#1e8a25" stroke-width="1.8" stroke-linecap="round" stroke-linejoin="round"/></svg>
<div class="t" style="left:29.5px;top:95px;font-size:13px;">Sky</div>
<div class="ab" style="left:0;top:113px;width:644px;height:24px;background:#0a4edb"></div>
<svg class="ab" style="left:7px;top:119px" width="16" height="14" viewBox="0 0 16 14"><path d="M1.5,6.5 L5.5,10.5 L13,2" fill="none" stroke="#3f9a5a" stroke-width="1.8" stroke-linecap="round" stroke-linejoin="round"/></svg>
<div class="t" style="left:29.5px;top:119px;font-size:13px;color:#fff">Top Color</div>
<svg class="ab" style="left:7px;top:143px" width="16" height="14" viewBox="0 0 16 14"><path d="M1.5,6.5 L5.5,10.5 L13,2" fill="none" stroke="#1e8a25" stroke-width="1.8" stroke-linecap="round" stroke-linejoin="round"/></svg>
<div class="t" style="left:29.5px;top:143px;font-size:13px;">Specifies the sky color at the top of the skybox.</div>
<svg class="ab" style="left:7px;top:167px" width="16" height="14" viewBox="0 0 16 14"><path d="M1.5,6.5 L5.5,10.5 L13,2" fill="none" stroke="#1e8a25" stroke-width="1.8" stroke-linecap="round" stroke-linejoin="round"/></svg>
<div class="t" style="left:29.5px;top:167px;font-size:13px;">Horizon Color</div>
<div class="ab" style="left:644px;top:0;width:15px;height:190px;background:#f8f8f8;border-left:1px solid #e6e6e6;box-sizing:border-box"></div>
<div class="ab" style="left:648px;top:3px;width:8px;height:41px;background:#7f7f7f;border-radius:4px"></div>
<div class="ab" style="left:643px;top:1px;width:1px;height:15px;background:#c8c8c8"></div>
</div>
<div class="ab" style="left:386px;top:257.3px;width:660px;height:2.6px;background:#8f8f8f"></div>
<div class="ab" style="left:386px;top:259.9px;width:661px;height:296px;background:#fefefe;border-left:1px solid #9c9c9c;border-right:1px solid #c8c8c8;box-sizing:border-box"></div>
<div class="t" style="left:394.5px;top:272px;font-size:13px;font-weight:bold">Source text</div>
<div class="ab" style="left:956px;top:265px;width:13px;height:13px;background:#fff;border:1px solid #c4c4c4;border-radius:3px;box-sizing:border-box"></div>
<div class="t h" style="left:974px;top:266px;font-size:13px;color:#222">NCR mode</div>
<div class="t" style="left:399px;top:300px;font-size:13px">Top&#183;Color</div>
<div class="t" style="left:395px;top:336px;font-size:13px;font-weight:bold">Translation to Deutsch (Deutschland)</div>
<div class="ab" style="left:394px;top:358px;width:645px;height:26px;background:#fff;border:1px solid #a9a9a9;box-sizing:border-box"></div>
<div class="t" style="left:399.5px;top:365px;font-size:13px">Oberfarbe</div>
<div class="t" style="left:395px;top:396px;font-size:13px;font-weight:bold">Translator comments for Deutsch (Deutschland)</div>
<div class="ab" style="left:394px;top:418px;width:645px;height:26px;background:#fff;border:1px solid #a9a9a9;box-sizing:border-box"></div>
<div class="ab" style="left:386px;top:555.5px;width:661px;height:1.5px;background:#8e8e8e"></div>
<svg class="ab" style="left:387px;top:559px" width="36" height="16" viewBox="0 0 36 16">
<circle cx="7.9" cy="7.75" r="7" fill="#454545"/>
<path d="M5.1,4.95 L10.7,10.55 M10.7,4.95 L5.1,10.55" stroke="#fff" stroke-width="2" stroke-linecap="round"/>
<circle cx="26" cy="7.75" r="7" fill="#454545"/>
<path d="M25.2,7.4 V5.9 H29.5 V9.6 H27.6 M22.3,7.4 H27.6 V11.2 H22.3 Z" stroke="#fff" stroke-width="1.3" fill="none" stroke-linejoin="round"/>
</svg>
<div class="t h" style="left:678px;top:561.5px;font-size:11.6px;color:#333">Phrases and guesses</div>
<div class="ab" style="left:386px;top:579px;width:661px;height:1px;background:#a0a0a0"></div>
<div class="ab" style="left:386px;top:580px;width:661px;height:183px;background:#fff;border-left:1px solid #9c9c9c;border-right:1px solid #c8c8c8;box-sizing:border-box;overflow:hidden">
<div class="ab" style="left:0;top:17px;width:660px;height:18px;background:#ffffff"></div>
<div class="ab" style="left:0;top:35px;width:660px;height:18px;background:#f4f4f4"></div>
<div class="ab" style="left:0;top:53px;width:660px;height:18px;background:#ffffff"></div>
<div class="ab" style="left:0;top:71px;width:660px;height:18px;background:#f4f4f4"></div>
<div class="ab" style="left:0;top:89px;width:660px;height:18px;background:#ffffff"></div>
<div class="ab" style="left:0;top:107px;width:660px;height:18px;background:#f4f4f4"></div>
<div class="ab" style="left:0;top:125px;width:660px;height:18px;background:#ffffff"></div>
<div class="ab" style="left:0;top:143px;width:660px;height:18px;background:#f4f4f4"></div>
<div class="ab" style="left:0;top:161px;width:660px;height:18px;background:#ffffff"></div>
<div class="ab" style="left:0;top:179px;width:660px;height:18px;background:#f4f4f4"></div>
<div class="ab" style="left:0;top:0;width:660px;height:17px;background:#ececec"></div>
<div class="t" style="left:4.5px;top:2.6px;font-size:11.5px;letter-spacing:0.15px;color:#333">Source phrase</div>
<div class="ab" style="left:99.5px;top:2px;width:1px;height:13px;background:#cfcfcf"></div>
<div class="t" style="left:105px;top:2.6px;font-size:11.5px;letter-spacing:0.15px;color:#333">Translation</div>
<div class="ab" style="left:199.5px;top:2px;width:1px;height:13px;background:#cfcfcf"></div>
<div class="t" style="left:204.5px;top:2.6px;font-size:11.5px;letter-spacing:0.15px;color:#333">Definition</div>
<div class="t" style="left:6.5px;top:20px;font-size:13px">Top Color</div>
<div class="t" style="left:105px;top:20px;font-size:13px">Oberfarbe</div>
<div class="t" style="left:205px;top:20px;font-size:13px">Guess from 'ProceduralSkyTextureDataSection' (&#8984;1)</div>
<div class="t" style="left:6.5px;top:38px;font-size:13px">Color</div>
<div class="t" style="left:105px;top:38px;font-size:13px">Farbe</div>
<div class="t" style="left:205px;top:38px;font-size:13px">Guess from 'IconSection' (&#8984;2)</div>
<div class="t" style="left:6.5px;top:56px;font-size:13px">Horizon Color</div>
<div class="t" style="left:105px;top:56px;font-size:13px">Horizontfarbe</div>
<div class="t" style="left:205px;top:56px;font-size:13px">Guess from 'ProceduralSkyTextureDataSection' (&#8984;3)</div>
</div>
<div class="ab" style="left:0;top:762.5px;width:1047px;height:1.5px;background:#6a6a6a"></div>
<div class="t" style="left:938px;top:771px;font-size:13px;letter-spacing:0.45px">9/17943</div>
<div class="t" style="left:1001px;top:771px;font-size:13px">MOD</div>
<div class="ab" style="left:1046px;top:0;width:1px;height:790px;background:#bfbfbf"></div>
<div class="ab" style="left:1047px;top:0;width:1px;height:790px;background:#a9a9a9"></div>
</div>
<div class="ab" style="left:1048px;top:0;width:1px;height:791px;background:#d3d3d3"></div>
</body></html>
